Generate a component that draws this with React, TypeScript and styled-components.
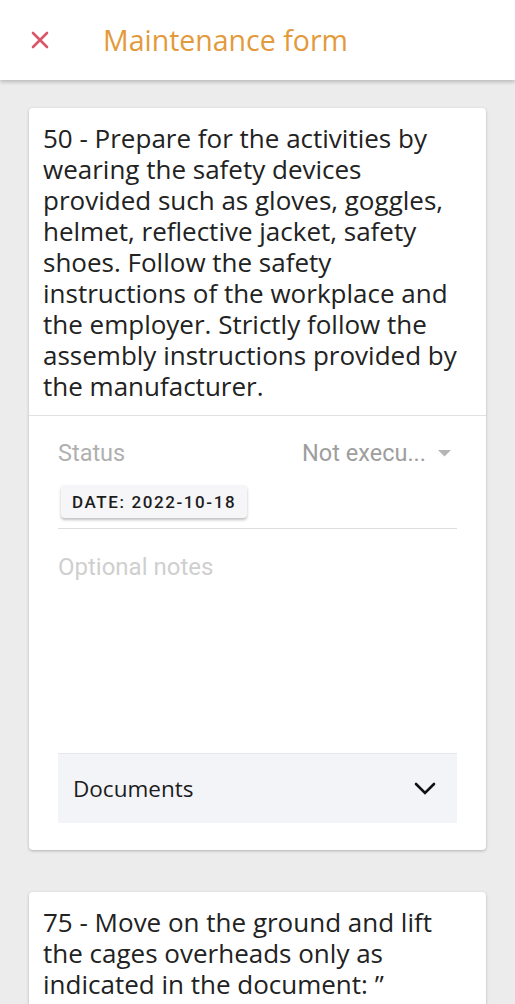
import React from "react";
import styled, { createGlobalStyle } from "styled-components";

const Global = createGlobalStyle`
  html, body { margin: 0; padding: 0; background: #ececec; }
  body { font-family: "Open Sans", "Noto Sans", sans-serif; }
  * { box-sizing: border-box; }
`;

const Page = styled.div`
  min-height: 1004px;
  background: #ececec;
  display: flex;
  flex-direction: column;
  overflow: hidden;
`;

const Header = styled.header`
  height: 80px;
  background: #fff;
  display: flex;
  align-items: center;
  padding-left: 29px;
  box-shadow: 0 2px 4px rgba(0, 0, 0, 0.22);
  position: relative;
  z-index: 1;
`;

const CloseButton = styled.button`
  width: 22px;
  height: 22px;
  border: none;
  background: none;
  padding: 0;
  display: flex;
  align-items: center;
  justify-content: center;
  margin-right: 52px;
`;

const Title = styled.h1`
  margin: 0;
  font-family: "Open Sans", "Noto Sans", sans-serif;
  font-weight: 500;
  font-size: 28.5px;
  color: #e39a3b;
`;

const List = styled.div`
  display: flex;
  flex-direction: column;
  gap: 42px;
  padding: 28px 29px 0;
`;

const Card = styled.section`
  background: #fff;
  border-radius: 4px;
  box-shadow: 0 1px 3px rgba(0, 0, 0, 0.25);
`;

const Question = styled.p<{ $divided?: boolean }>`
  margin: 0;
  padding: 15px 14px 13px;
  font-family: "Open Sans", "Noto Sans", sans-serif;
  font-size: 26px;
  line-height: 31px;
  color: #222;
  border-bottom: ${(p) => (p.$divided ? "1px solid #e2e2e2" : "none")};
`;

const Body = styled.div`
  padding: 22px 29px 27px;
  display: flex;
  flex-direction: column;
`;

const StatusRow = styled.div`
  display: flex;
  justify-content: space-between;
  align-items: center;
  height: 30px;
  font-family: Roboto, sans-serif;
  font-size: 23.5px;
`;

const StatusLabel = styled.span`
  color: #b0b0b0;
`;

const StatusValue = styled.span`
  color: #9e9e9e;
  display: flex;
  align-items: center;
  gap: 12px;
  padding-right: 6px;
`;

const DateField = styled.div`
  padding: 17px 0 10px 3px;
  border-bottom: 1px solid #dedede;
`;

const DateChip = styled.button`
  height: 33px;
  padding: 0 11px;
  border: none;
  border-radius: 4px;
  background: #f6f6f9;
  box-shadow: 0 2px 3px rgba(0, 0, 0, 0.25);
  font-family: Roboto, sans-serif;
  font-weight: 500;
  font-size: 17px;
  letter-spacing: 1.6px;
  color: #1c1c1c;
`;

const Notes = styled.div`
  padding-top: 24px;
  height: 224px;
  font-family: Roboto, sans-serif;
  font-size: 24px;
  color: #cfcfcf;
`;

const Documents = styled.div`
  height: 70px;
  background: #f3f4f8;
  border-top: 1px solid #e6e7ec;
  display: flex;
  align-items: center;
  justify-content: space-between;
  padding: 0 20px 0 15px;
  font-family: "Open Sans", "Noto Sans", sans-serif;
  font-size: 22.5px;
  color: #1c1c1c;
`;

export default function App() {
  return (
    <Page>
      <Global />
      <Header>
        <CloseButton aria-label="close">
          <svg width="18" height="18" viewBox="0 0 18 18">
            <path d="M2 2 L16 16 M16 2 L2 16" stroke="#d9566b" strokeWidth="2.6" strokeLinecap="round" />
          </svg>
        </CloseButton>
        <Title>Maintenance form</Title>
      </Header>
      <List>
        <Card>
          <Question $divided>
            50 - Prepare for the activities by wearing the safety devices provided such as gloves, goggles,
            helmet, reflective jacket, safety shoes. Follow the safety instructions of the workplace and the
            employer. Strictly follow the assembly instructions provided by the manufacturer.
          </Question>
          <Body>
            <StatusRow>
              <StatusLabel>Status</StatusLabel>
              <StatusValue>
                Not execu...
                <svg width="13" height="7" viewBox="0 0 13 7">
                  <path d="M0 0 L13 0 L6.5 6.5 Z" fill="#b5b5b5" />
                </svg>
              </StatusValue>
            </StatusRow>
            <DateField>
              <DateChip>DATE: 2022-10-18</DateChip>
            </DateField>
            <Notes>Optional notes</Notes>
            <Documents>
              Documents
              <svg width="24" height="16" viewBox="0 0 24 16">
                <path d="M3 3 L12 12 L21 3" stroke="#111" strokeWidth="2.6" fill="none" strokeLinecap="round" />
              </svg>
            </Documents>
          </Body>
        </Card>
        <Card>
          <Question>
            75 - Move on the ground and lift the cages overheads only as indicated in the document: ”
          </Question>
        </Card>
      </List>
    </Page>
  );
}
